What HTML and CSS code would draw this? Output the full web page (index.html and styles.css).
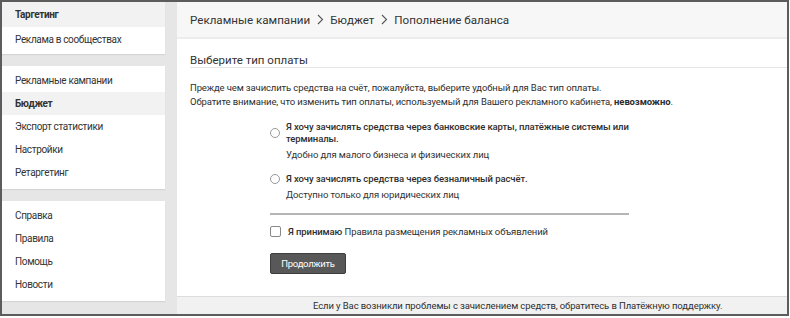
FILE: index.html
```html
<!DOCTYPE html>
<html lang="ru">
<head>
<meta charset="utf-8">
<link rel="stylesheet" href="styles.css">
</head>
<body>
<div class="frame">
  <aside class="sidebar">
    <nav class="card card-first">
      <div class="item active">Таргетинг</div>
      <div class="item">Реклама в сообществах</div>
    </nav>
    <nav class="card card-second">
      <div class="item">Рекламные кампании</div>
      <div class="item active">Бюджет</div>
      <div class="item">Экспорт статистики</div>
      <div class="item">Настройки</div>
      <div class="item">Ретаргетинг</div>
    </nav>
    <nav class="card card-third">
      <div class="item">Справка</div>
      <div class="item">Правила</div>
      <div class="item">Помощь</div>
      <div class="item">Новости</div>
    </nav>
  </aside>
  <main class="main">
    <header class="crumbs">
      <span>Рекламные кампании</span>
      <svg class="chev" width="7" height="11" viewBox="0 0 7 11"><path d="M1 1 L5.5 5.5 L1 10" fill="none" stroke="#555" stroke-width="1.1"/></svg>
      <span>Бюджет</span>
      <svg class="chev" width="7" height="11" viewBox="0 0 7 11"><path d="M1 1 L5.5 5.5 L1 10" fill="none" stroke="#555" stroke-width="1.1"/></svg>
      <span>Пополнение баланса</span>
    </header>
    <section class="content">
      <h2 class="title">Выберите тип оплаты</h2>
      <p class="intro">Прежде чем зачислить средства на счёт, пожалуйста, выберите удобный для Вас тип оплаты.<br>Обратите внимание, что изменить тип оплаты, используемый для Вашего рекламного кабинета, <b>невозможно</b>.</p>
      <div class="form">
        <div class="option">
          <span class="radio"></span>
          <div class="opt-text">
            <div class="opt-label">Я хочу зачислять средства через банковские карты, платёжные системы или терминалы.</div>
            <div class="opt-desc">Удобно для малого бизнеса и физических лиц</div>
          </div>
        </div>
        <div class="option">
          <span class="radio"></span>
          <div class="opt-text">
            <div class="opt-label">Я хочу зачислять средства через безналичный расчёт.</div>
            <div class="opt-desc">Доступно только для юридических лиц</div>
          </div>
        </div>
        <div class="sep"></div>
        <div class="agree">
          <span class="checkbox"></span>
          <span><b>Я принимаю</b> Правила размещения рекламных объявлений</span>
        </div>
        <button class="btn">Продолжить</button>
      </div>
    </section>
    <footer class="foot">Если у Вас возникли проблемы с зачислением средств, обратитесь в Платёжную поддержку.</footer>
  </main>
</div>
</body>
</html>
```

FILE: styles.css
```css
* { box-sizing: border-box; }
html, body { margin: 0; padding: 0; }
body {
  font-family: Roboto, "Noto Sans", "Liberation Sans", sans-serif;
  color: #2e2e2e;
  background: #fff;
}
.frame {
  width: 789px;
  height: 316px;
  border: 2px solid #5c5c5c;
  background: #e6e6e6;
  display: flex;
  gap: 12px;
  overflow: hidden;
}
.sidebar {
  width: 163px;
  flex: none;
  display: flex;
  flex-direction: column;
  gap: 12px;
}
.card {
  background: #fff;
  box-shadow: 0 1px 1px rgba(0,0,0,0.08);
}
.card-first { padding: 0 0 2px; }
.card-first .item { height: 25px; }
.card-second { padding: 3px 0 5px; }
.card-third { padding: 3px 0 5px; }
.item {
  height: 23px;
  display: flex;
  align-items: center;
  padding-left: 13px;
  font-size: 10px;
  letter-spacing: -0.35px;
  color: #333;
}
.item.active {
  background: #f2f2f2;
  font-weight: 700;
}
.main {
  flex: 1;
  display: flex;
  flex-direction: column;
  background: #fff;
}
.crumbs {
  height: 37px;
  background: #f7f7f7;
  border-bottom: 2px solid #ececec;
  display: flex;
  align-items: center;
  gap: 6px;
  padding-left: 13px;
  font-size: 11.6px;
  color: #333;
}
.chev { flex: none; margin-left: 1px; }
.content {
  flex: 1;
  padding: 0 0 0 13px;
}
.title {
  margin: 0;
  font-size: 11.5px;
  font-weight: 400;
  color: #333;
  height: 29px;
  padding-top: 14px;
  border-bottom: 1px solid #e6e6e6;
}
.intro {
  margin: 13px 0 0;
  font-size: 9.5px;
  letter-spacing: -0.12px;
  line-height: 14px;
  color: #2e2e2e;
}
.form {
  margin: 12px 0 0 80px;
  width: 360px;
}
.option {
  display: flex;
  gap: 6px;
  margin-bottom: 11px;
}
.radio {
  flex: none;
  width: 10px;
  height: 10px;
  border: 1px solid #999;
  border-radius: 50%;
  margin-top: 7px;
}
.option + .option .radio { margin-top: 1px; }
.opt-text { width: 345px; }
.opt-label {
  font-size: 9.5px;
  font-weight: 500;
  letter-spacing: -0.1px;
  line-height: 12px;
  color: #2e2e2e;
}
.opt-desc {
  font-size: 9.5px;
  letter-spacing: -0.1px;
  line-height: 14px;
  margin-top: 3px;
  color: #333;
}
.sep {
  height: 2px;
  background: #b5b5b5;
  margin-top: 10px;
  width: 359px;
}
.agree {
  display: flex;
  align-items: center;
  gap: 7px;
  margin-top: 11px;
  font-size: 9.5px;
  letter-spacing: -0.1px;
  color: #2e2e2e;
}
.agree b { font-weight: 500; }
.checkbox {
  width: 11px;
  height: 11px;
  border: 1px solid #888;
  border-radius: 2px;
  flex: none;
}
.btn {
  margin-top: 16px;
  width: 76px;
  height: 21px;
  background: #585858;
  border: 1px solid #3e3e3e;
  border-radius: 2px;
  color: #fff;
  font-family: inherit;
  font-size: 9.5px;
  letter-spacing: -0.3px;
  padding: 0;
}
.foot {
  height: 18px;
  background: #f1f1f1;
  border-top: 1px solid #dcdcdc;
  font-size: 9.5px;
  letter-spacing: -0.1px;
  color: #2e2e2e;
  display: flex;
  align-items: center;
  padding-left: 136px;
}
```
